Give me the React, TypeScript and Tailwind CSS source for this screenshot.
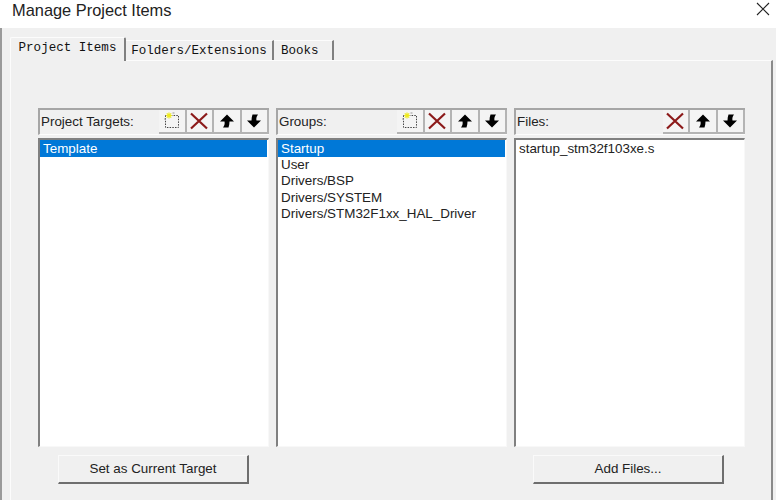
type Tool = "new" | "del" | "up" | "down"

const ToolIcon = ({ kind }: { kind: Tool }) => {
    if (kind === "new") {
        return (
            <svg width="18" height="18" viewBox="0 0 18 18">
                <rect x="2.5" y="3.5" width="13" height="12" fill="none" stroke="#444" strokeDasharray="1.5 1.2" />
                <path d="M6 0.5v6M3 3.5h6M3.8 1.3l4.4 4.4M8.2 1.3l-4.4 4.4" stroke="#eeea20" strokeWidth="1.2" />
                <path d="M9.5 1h2M1 7h2" stroke="#999" strokeWidth="1" />
            </svg>
        )
    }
    if (kind === "del") {
        return (
            <svg width="18" height="18" viewBox="0 0 18 18">
                <path d="M1 1.5l16 15M17 1.5l-16 15" stroke="#8c1a1a" strokeWidth="2.2" />
            </svg>
        )
    }
    return (
        <svg width="18" height="18" viewBox="0 0 18 18" className={kind === "down" ? "rotate-180" : ""}>
            <path d="M9 2.5L2 9.5H6.5C7 11.5 6.5 13.5 5 15.5H10.5C11.2 13.5 11.5 11.5 11.5 9.5H16Z" fill="#000" />
        </svg>
    )
}

const Panel = ({ label, tools, items, selected }: { label: string; tools: Tool[]; items: string[]; selected?: number }) => (
    <div className="w-[231px] flex flex-col">
        <div className="h-[27px] flex items-center border-t-2 border-l-2 border-[#a6a6a6] border-b border-b-[#fcfcfc]">
            <span className="pl-[1px] pt-[1px] flex-1 text-[#222]">{label}</span>
            <div className="flex h-full">
                {tools.map((t, i) => (
                    <div key={i} className="w-[27.5px] flex items-center justify-center border-r-2 border-b-2 border-[#b4b4b4] bg-[#f4f4f4]">
                        <ToolIcon kind={t} />
                    </div>
                ))}
            </div>
        </div>
        <div className="mt-[3px] h-[309px] bg-white border-t-2 border-l-2 border-[#808080] border-r border-b border-r-[#f8f8f8] border-b-[#f8f8f8] pr-[1px] leading-[16px] text-[#222]">
            {items.map((it, i) => (
                <div key={it} className={i === selected ? "bg-[#0078d7] text-white pl-[3px] pt-[1px] h-[17px]" : i === 0 ? "pl-[3px] pt-[1px] h-[17px]" : "pl-[3px] h-[16.3px]"}>
                    {it}
                </div>
            ))}
        </div>
    </div>
)

const DlgButton = ({ label }: { label: string }) => (
    <button className="w-[191px] h-[29px] bg-[#f0f0f0] border-t border-l border-[#fafafa] border-r-2 border-b-2 border-r-[#6e6e6e] border-b-[#6e6e6e] text-[#222]">
        {label}
    </button>
)

export default function App() {
    return (
        <div className="w-[776px] h-[500px] overflow-hidden bg-[#f0f0f0] text-[13.4px] font-['Liberation_Sans',sans-serif] flex flex-col">
            <div className="h-[28px] bg-white flex items-start justify-between pl-[12px] pr-[6px] pt-[1px] shrink-0">
                <span className="text-[16.4px] leading-[18px] text-[#222]">Manage Project Items</span>
                <svg width="14" height="14" viewBox="0 0 14 14" className="mt-[1px]">
                    <path d="M1 1l12 12M13 1L1 13" stroke="#222" strokeWidth="1.1" />
                </svg>
            </div>
            <div className="flex-1 border-l-2 border-[#9a9a9a] pl-[8px] pt-[9px] flex flex-col">
                <div className="flex h-[23px] font-['Liberation_Mono',monospace] text-[12.55px] text-[#111] relative z-10">
                    <div className="w-[116px] h-[24px] bg-[#f0f0f0] border-t border-l border-[#fcfcfc] border-r-2 border-r-[#808080] rounded-t-[2px] flex items-center justify-center pb-[3px]">Project Items</div>
                    <div className="mt-[3px] w-[148px] h-[20px] border-t border-[#fcfcfc] border-r-2 border-r-[#808080] flex items-center justify-center pt-[2px]">Folders/Extensions</div>
                    <div className="mt-[3px] w-[60px] h-[20px] border-t border-[#fcfcfc] border-r-2 border-r-[#808080] flex items-center pl-[7px] pt-[2px]">Books</div>
                </div>
                <div className="flex-1 border-l border-t border-[#fcfcfc] border-r-2 border-r-[#8a8a8a] mr-[3px] pt-[47px] pl-[27px]">
                    <div className="flex gap-[7px]">
                        <Panel label="Project Targets:" tools={["new", "del", "up", "down"]} items={["Template"]} selected={0} />
                        <Panel label="Groups:" tools={["new", "del", "up", "down"]} items={["Startup", "User", "Drivers/BSP", "Drivers/SYSTEM", "Drivers/STM32F1xx_HAL_Driver"]} selected={0} />
                        <Panel label="Files:" tools={["del", "up", "down"]} items={["startup_stm32f103xe.s"]} />
                    </div>
                    <div className="flex mt-[8px] pl-[20px] gap-[284px]">
                        <DlgButton label="Set as Current Target" />
                        <DlgButton label="Add Files..." />
                    </div>
                </div>
            </div>
        </div>
    )
}
